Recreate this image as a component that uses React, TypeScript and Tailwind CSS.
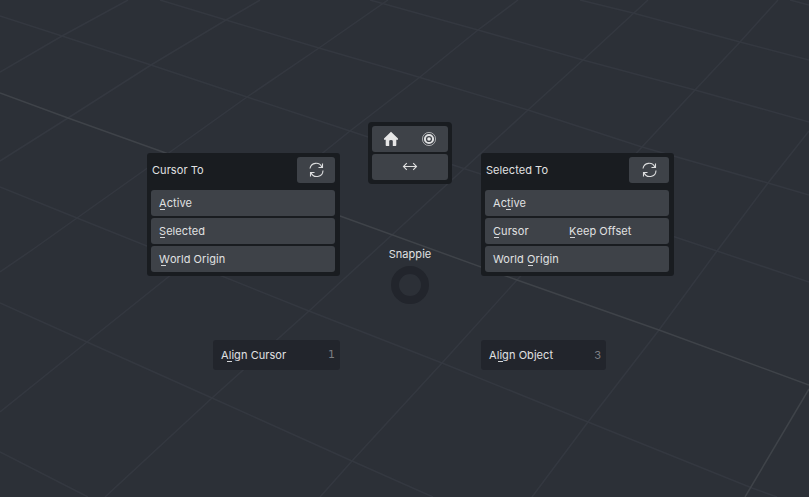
import type { ReactNode } from "react";

const GRID = [
  "M790 0L809 5", "M580 0L633 13L740 42L809 60", "M370 0L478 30L583 60L695 90L809 122",
  "M160 0L226 20L319 48L405 73L528 110L642 147L768 183L809 195",
  "M0 16L62 36L151 65L247 97L350 131L453 165L675 237L717 251L809 282",
  "M0 187L77 218L309 311L442 363L588 422L752 488L777 497",
  "M0 303L87 342L212 398L352 461L433 497", "M0 452L88 497",
  "M128 0L62 36L0 72", "M260 0L226 20L151 65L68 118L0 161",
  "M388 0L319 48L247 97L170 152L77 218L32 250L0 272",
  "M518 0L478 30L420 77L350 131L167 278L87 342L0 412",
  "M648 0L583 60L528 110L405 223L309 311L212 398L105 497",
  "M778 0L740 42L695 90L642 147L517 280L442 363L352 461L320 497",
  "M809 131L768 183L717 251L659 330L588 422L532 497",
];
const AXES = ["M0 93L68 118L163 152L340 216L517 280L659 330L809 385", "M809 389L745 497"];

function Viewport() {
  return (
    <svg className="absolute inset-0" width="809" height="497" fill="none">
      {GRID.map((d) => <path key={d} d={d} stroke="#343840" strokeWidth="1.5" />)}
      {AXES.map((d) => <path key={d} d={d} stroke="#3f4349" strokeWidth="1.5" />)}
    </svg>
  );
}

function Label({ text, at }: { text: string; at: number }) {
  return (
    <span className="whitespace-pre">
      {text.slice(0, at)}
      <span className="relative">
        {text[at]}
        <span className="absolute bottom-0 left-1/2 -ml-[3px] h-px w-[5px] bg-[#d5d6d8]" />
      </span>
      {text.slice(at + 1)}
    </span>
  );
}

function Button({ children, className = "" }: { children?: ReactNode; className?: string }) {
  return <button className={`flex h-[26px] items-center rounded-[3px] bg-[#3e4248] ${className}`}>{children}</button>;
}

function Refresh() {
  return (
    <svg width="16" height="16" viewBox="0 0 16 16" fill="none" stroke="#dcddde" strokeWidth="1.1">
      <path d="M2 6.5A6.2 6.2 0 0 1 13.8 5M14.5 1.5V5.5H10.5" />
      <path d="M15 8.5A6.2 6.2 0 0 1 3 10.5M2.5 14.5V10.5H6.5" />
    </svg>
  );
}

function Panel({ title, wide, className, children }: { title: string; wide?: boolean; className: string; children: ReactNode }) {
  return (
    <section className={`absolute flex w-[193px] flex-col gap-0.5 rounded-[3px] bg-[#191c20] p-1 pr-[5px] ${className}`}>
      <header className="mb-[5px] flex items-center justify-between pl-px">
        <span>{title}</span>
        <Button className={wide ? "w-10 justify-center" : "w-[38px] justify-center"}><Refresh /></Button>
      </header>
      {children}
    </section>
  );
}

export default function App() {
  return (
    <main className="relative h-[497px] w-[809px] overflow-hidden bg-[#2c3037] font-['Inter','Liberation_Sans',sans-serif] text-[11px] leading-4 tracking-[0.06px] text-[#e0e1e2]">
      <Viewport />

      <Panel title="Cursor To" className="left-[147px] top-[153px]">
        <Button className="px-2"><Label text="Active" at={0} /></Button>
        <Button className="px-2"><Label text="Selected" at={0} /></Button>
        <Button className="px-2"><Label text="World Origin" at={0} /></Button>
      </Panel>

      <section className="absolute left-[368px] top-[122px] flex w-[84px] flex-col gap-0.5 rounded-sm bg-[#191c20] p-1">
        <Button className="justify-around">
          <svg width="16" height="16" viewBox="0 0 16 16" fill="#e6e6e6">
            <path d="M8 .8 15 7.6V8.7H13.3V14.2Q13.3 15 12.5 15H9.8V10Q9.8 9 8 9T6.2 10V15H3.5Q2.7 15 2.7 14.2V8.7H1V7.6Z" />
          </svg>
          <svg width="16" height="16" viewBox="0 0 16 16" fill="none" stroke="#dedfe0">
            <circle cx="8" cy="8" r="6.6" strokeWidth=".65" />
            <circle cx="8" cy="8" r="4.1" strokeWidth="2" />
            <circle cx="8" cy="8" r="1.8" fill="#e6e6e6" stroke="none" />
          </svg>
        </Button>
        <Button className="justify-center">
          <svg width="16" height="16" viewBox="0 0 16 16" fill="none" stroke="#e0e0e0" strokeWidth="1.1">
            <path d="M1.5 7.5H14.5M4.8 4.2 1.5 7.5 4.8 10.8M11.2 4.2 14.5 7.5 11.2 10.8" />
          </svg>
        </Button>
      </section>

      <Panel title="Selected To" wide className="left-[481px] top-[153px]">
        <Button className="px-2"><Label text="Active" at={2} /></Button>
        <Button className="px-2">
          <span className="w-[76px] text-left"><Label text="Cursor" at={0} /></span>
          <Label text="Keep Offset" at={0} />
        </Button>
        <Button className="px-2"><Label text="World Origin" at={6} /></Button>
      </Panel>

      <div className="absolute left-[380px] top-[246px] flex w-[60px] flex-col items-center">
        <span>Snappie</span>
        <span className="mt-[4px] size-[38px] rounded-full border-[8px] border-[#22252c]" />
      </div>

      <button className="absolute left-[213px] top-[340px] flex h-[30px] w-[127px] items-center justify-between rounded-[3px] bg-[#22252c] pl-2 pr-[5px]">
        <Label text="Align Cursor" at={1} />
        <span className="font-['DejaVu_Sans',sans-serif] text-[#7b7d82]">1</span>
      </button>
      <button className="absolute left-[481px] top-[340px] flex h-[30px] w-[125px] items-center justify-between rounded-[3px] bg-[#22252c] pl-2 pr-[5px]">
        <Label text="Align Object" at={2} />
        <span className="text-[#7b7d82]">3</span>
      </button>
    </main>
  );
}
